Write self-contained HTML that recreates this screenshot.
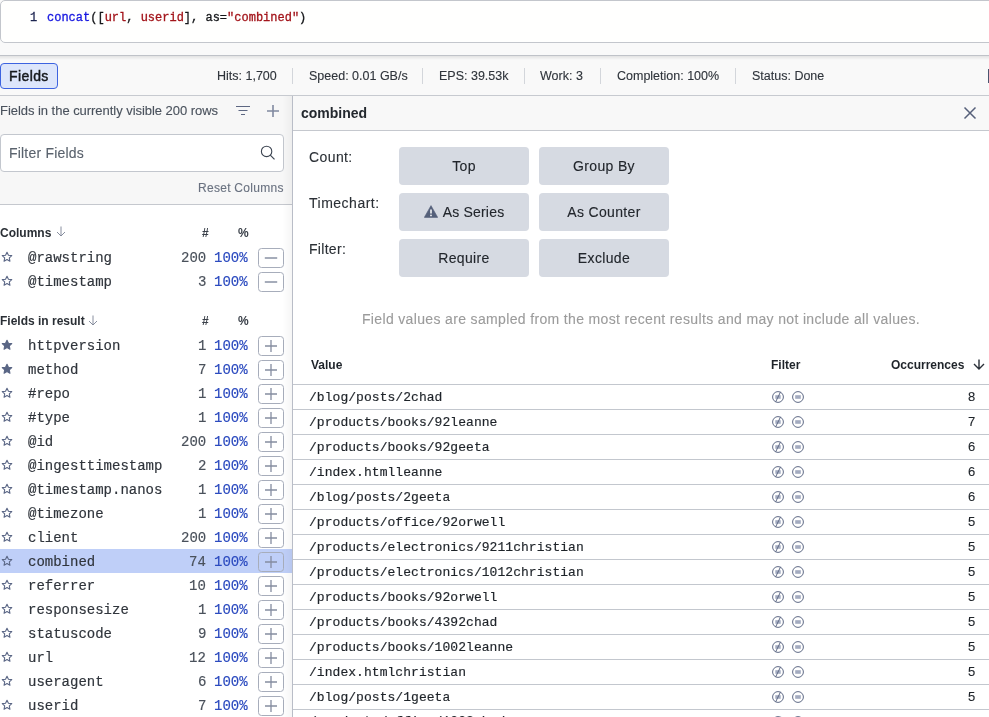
<!DOCTYPE html><html><head><meta charset="utf-8"><style>
*{margin:0;padding:0;box-sizing:border-box}
html,body{width:989px;height:717px;overflow:hidden;background:#f9f9f9;font-family:"Liberation Sans",sans-serif}
#root{position:absolute;left:0;top:0;width:989px;height:717px;overflow:hidden;filter:grayscale(0)}
.t{position:absolute;white-space:pre;line-height:1;will-change:transform}
.m{font-family:"Liberation Mono",monospace;-webkit-text-stroke:0.18px currentColor}
.ic{position:absolute;display:block}
#editor{position:absolute;left:0;top:0;width:1000px;height:43px;background:#fffffe;border:1px solid #c3c6cc;border-radius:5px}
#sep{position:absolute;left:0;top:55px;width:989px;height:1px;background:#bfc2c8}
#sepsh{position:absolute;left:0;top:56px;width:989px;height:4px;background:linear-gradient(to bottom,rgba(0,0,0,0.09),rgba(0,0,0,0))}
#fieldsbtn{position:absolute;left:0;top:63px;width:58px;height:26px;background:#dde6fb;border:1px solid #3d63e0;border-radius:4px}
.vsep{position:absolute;top:68px;width:1px;height:16px;background:#d3d6db}
#rbtn{position:absolute;left:988px;top:69px;width:4px;height:14px;background:#4b5570}
#statusline{position:absolute;left:0;top:95px;width:989px;height:1px;background:#c7cad0}
#lhead{position:absolute;left:0;top:96px;width:292px;height:108px;background:#f7f7f7}
#filterinput{position:absolute;left:0;top:134px;width:284px;height:38px;background:#fff;border:1px solid #c3c7ce;border-radius:4px}
#lline{position:absolute;left:0;top:204px;width:292px;height:1px;background:#c5c8ce}
#llist{position:absolute;left:0;top:205px;width:292px;height:512px;background:#fff}
.hl{position:absolute;left:0;width:292px;height:24px;background:#bfcff8}
#lshadow{position:absolute;left:283px;top:96px;width:9px;height:621px;background:linear-gradient(to right,rgba(0,0,0,0),rgba(0,0,0,0.04))}
#lborder{position:absolute;left:292px;top:96px;width:1px;height:621px;background:#b9bdc7}
#rhead{position:absolute;left:293px;top:96px;width:696px;height:35px;background:#f8f8f8;border-bottom:1px solid #c5c8ce}
#rbody{}
.abtn{position:absolute;width:130px;height:38px;background:#d6dae2;border-radius:4px}
.rline{position:absolute;left:293px;width:696px;height:1px;background:#c3c7ce}
</style></head><body><div id="root"><div style="position:absolute;left:293px;top:131px;width:696px;height:586px;background:#fff"></div><div id="editor"></div>
<div class="t m" style="left:29.5px;top:12.00px;font-size:12px;color:#1d2550;-webkit-text-stroke:0.3px currentColor;">1</div>
<div class="t m" style="left:47.1px;top:12.00px;font-size:12px;color:#141619;-webkit-text-stroke:0.3px currentColor;"><span style="color:#1616e0">concat</span>([<span style="color:#a3151b">url</span>, <span style="color:#a3151b">userid</span>], as=<span style="color:#a3151b">"combined"</span>)</div>
<div id="sep"></div><div id="sepsh"></div>
<div id="fieldsbtn"></div>
<div class="t" style="left:9.3px;top:68.65px;font-size:14px;font-weight:400;color:#16191d;letter-spacing:0.4px;-webkit-text-stroke:0.45px currentColor;">Fields</div>
<div class="t" style="left:217.2px;top:69.92px;font-size:12.5px;font-weight:400;color:#2f343b;-webkit-text-stroke:0.12px currentColor;">Hits: 1,700</div>
<div class="t" style="left:309.0px;top:69.92px;font-size:12.5px;font-weight:400;color:#2f343b;-webkit-text-stroke:0.12px currentColor;">Speed: 0.01 GB/s</div>
<div class="t" style="left:438.8px;top:69.92px;font-size:12.5px;font-weight:400;color:#2f343b;-webkit-text-stroke:0.12px currentColor;">EPS: 39.53k</div>
<div class="t" style="left:540.0px;top:69.92px;font-size:12.5px;font-weight:400;color:#2f343b;-webkit-text-stroke:0.12px currentColor;">Work: 3</div>
<div class="t" style="left:616.7px;top:69.92px;font-size:12.5px;font-weight:400;color:#2f343b;-webkit-text-stroke:0.12px currentColor;">Completion: 100%</div>
<div class="t" style="left:751.8px;top:69.92px;font-size:12.5px;font-weight:400;color:#2f343b;-webkit-text-stroke:0.12px currentColor;">Status: Done</div>
<div class="vsep" style="left:292px"></div>
<div class="vsep" style="left:422px"></div>
<div class="vsep" style="left:524px"></div>
<div class="vsep" style="left:600px"></div>
<div class="vsep" style="left:735px"></div>
<div id="rbtn"></div>
<div id="statusline"></div>
<div id="lhead"></div>
<div class="t" style="left:0px;top:103.90px;font-size:13px;font-weight:400;color:#4a525d;-webkit-text-stroke:0.12px currentColor;letter-spacing:-0.04px;">Fields in the currently visible 200 rows</div>
<svg class="ic" style="left:235px;top:104px" width="16" height="14" viewBox="0 0 16 14"><path d="M1 2.5h14M3.5 6.5h9M6 10.5h4" stroke="#5d6782" stroke-width="1.1" fill="none"/></svg>
<svg class="ic" style="left:265px;top:104px" width="16" height="14" viewBox="0 0 16 14"><path d="M8 1v12M2 7h12" stroke="#8089a0" stroke-width="1.6" fill="none"/></svg>
<div id="filterinput"></div>
<div class="t" style="left:9px;top:146.05px;font-size:14px;font-weight:400;color:#5a626d;-webkit-text-stroke:0.12px currentColor;letter-spacing:0.2px;">Filter Fields</div>
<svg class="ic" style="left:259px;top:144px" width="18" height="18" viewBox="0 0 18 18"><circle cx="7.6" cy="7.4" r="5.2" stroke="#3d4552" stroke-width="1.1" fill="none"/><path d="M11.3 11.1l4.2 4.2" stroke="#3d4552" stroke-width="1.2"/></svg>
<div class="t" style="right:705px;top:181.54px;font-size:12px;font-weight:400;color:#6a7280;-webkit-text-stroke:0.12px currentColor;letter-spacing:0.28px;">Reset Columns</div>
<div id="lline"></div>
<div id="llist"></div>
<div class="t" style="left:0px;top:226.64px;font-size:12px;font-weight:700;color:#2a2f35;">Columns</div>
<svg class="ic" style="left:54.5px;top:226.3px" width="12" height="12" viewBox="0 0 12 12"><path d="M6 0.5v9.5M2 6l4 4 4-4" stroke="#7a8294" stroke-width="0.9" fill="none"/></svg>
<div class="t" style="right:780.2px;top:227.14px;font-size:12px;font-weight:700;color:#3a4049;">#</div>
<div class="t" style="right:740.5px;top:227.14px;font-size:12px;font-weight:700;color:#3a4049;">%</div>
<svg class="ic" style="left:1px;top:251px" width="12" height="12" viewBox="0 0 12 12"><path d="M6 1.2l1.45 3.05 3.3.42-2.43 2.28.62 3.28L6 8.6l-2.94 1.63.62-3.28L1.25 4.67l3.3-.42z" fill="none" stroke="#5a6685" stroke-width="1.1" stroke-linejoin="round"/></svg>
<div class="t m" style="left:27.5px;top:251.07px;font-size:14px;color:#30353c;">@rawstring</div>
<div class="t m" style="right:783px;top:251.07px;font-size:14px;color:#4a515b;">200</div>
<div class="t m" style="left:214px;top:251.07px;font-size:14px;color:#2b4abf;">100%</div>
<svg class="ic" style="left:258px;top:248px" width="26" height="20" viewBox="0 0 26 20"><rect x="0.5" y="0.5" width="25" height="19" rx="3" fill="none" stroke="#a7adbb"/><path d="M6.8 10h12.4" stroke="#979eae" stroke-width="1.7"/></svg>
<svg class="ic" style="left:1px;top:275px" width="12" height="12" viewBox="0 0 12 12"><path d="M6 1.2l1.45 3.05 3.3.42-2.43 2.28.62 3.28L6 8.6l-2.94 1.63.62-3.28L1.25 4.67l3.3-.42z" fill="none" stroke="#5a6685" stroke-width="1.1" stroke-linejoin="round"/></svg>
<div class="t m" style="left:27.5px;top:275.07px;font-size:14px;color:#30353c;">@timestamp</div>
<div class="t m" style="right:783px;top:275.07px;font-size:14px;color:#4a515b;">3</div>
<div class="t m" style="left:214px;top:275.07px;font-size:14px;color:#2b4abf;">100%</div>
<svg class="ic" style="left:258px;top:272px" width="26" height="20" viewBox="0 0 26 20"><rect x="0.5" y="0.5" width="25" height="19" rx="3" fill="none" stroke="#a7adbb"/><path d="M6.8 10h12.4" stroke="#979eae" stroke-width="1.7"/></svg>
<div class="t" style="left:0px;top:315.14px;font-size:12px;font-weight:700;color:#2a2f35;">Fields in result</div>
<svg class="ic" style="left:87.3px;top:315px" width="12" height="12" viewBox="0 0 12 12"><path d="M6 0.5v9.5M2 6l4 4 4-4" stroke="#7a8294" stroke-width="0.9" fill="none"/></svg>
<div class="t" style="right:780.2px;top:315.44px;font-size:12px;font-weight:700;color:#3a4049;">#</div>
<div class="t" style="right:740.5px;top:315.44px;font-size:12px;font-weight:700;color:#3a4049;">%</div>
<svg class="ic" style="left:1px;top:339px" width="12" height="12" viewBox="0 0 12 12"><path d="M6 1.2l1.45 3.05 3.3.42-2.43 2.28.62 3.28L6 8.6l-2.94 1.63.62-3.28L1.25 4.67l3.3-.42z" fill="#5a6685" stroke="#5a6685" stroke-width="1.1" stroke-linejoin="round"/></svg>
<div class="t m" style="left:27.5px;top:339.07px;font-size:14px;color:#30353c;">httpversion</div>
<div class="t m" style="right:783px;top:339.07px;font-size:14px;color:#4a515b;">1</div>
<div class="t m" style="left:214px;top:339.07px;font-size:14px;color:#2b4abf;">100%</div>
<svg class="ic" style="left:258px;top:336px" width="26" height="20" viewBox="0 0 26 20"><rect x="0.5" y="0.5" width="25" height="19" rx="3" fill="none" stroke="#a7adbb"/><path d="M7 10h12M13 4v12" stroke="#858da0" stroke-width="1.3"/></svg>
<svg class="ic" style="left:1px;top:363px" width="12" height="12" viewBox="0 0 12 12"><path d="M6 1.2l1.45 3.05 3.3.42-2.43 2.28.62 3.28L6 8.6l-2.94 1.63.62-3.28L1.25 4.67l3.3-.42z" fill="#5a6685" stroke="#5a6685" stroke-width="1.1" stroke-linejoin="round"/></svg>
<div class="t m" style="left:27.5px;top:363.07px;font-size:14px;color:#30353c;">method</div>
<div class="t m" style="right:783px;top:363.07px;font-size:14px;color:#4a515b;">7</div>
<div class="t m" style="left:214px;top:363.07px;font-size:14px;color:#2b4abf;">100%</div>
<svg class="ic" style="left:258px;top:360px" width="26" height="20" viewBox="0 0 26 20"><rect x="0.5" y="0.5" width="25" height="19" rx="3" fill="none" stroke="#a7adbb"/><path d="M7 10h12M13 4v12" stroke="#858da0" stroke-width="1.3"/></svg>
<svg class="ic" style="left:1px;top:387px" width="12" height="12" viewBox="0 0 12 12"><path d="M6 1.2l1.45 3.05 3.3.42-2.43 2.28.62 3.28L6 8.6l-2.94 1.63.62-3.28L1.25 4.67l3.3-.42z" fill="none" stroke="#5a6685" stroke-width="1.1" stroke-linejoin="round"/></svg>
<div class="t m" style="left:27.5px;top:387.07px;font-size:14px;color:#30353c;">#repo</div>
<div class="t m" style="right:783px;top:387.07px;font-size:14px;color:#4a515b;">1</div>
<div class="t m" style="left:214px;top:387.07px;font-size:14px;color:#2b4abf;">100%</div>
<svg class="ic" style="left:258px;top:384px" width="26" height="20" viewBox="0 0 26 20"><rect x="0.5" y="0.5" width="25" height="19" rx="3" fill="none" stroke="#a7adbb"/><path d="M7 10h12M13 4v12" stroke="#858da0" stroke-width="1.3"/></svg>
<svg class="ic" style="left:1px;top:411px" width="12" height="12" viewBox="0 0 12 12"><path d="M6 1.2l1.45 3.05 3.3.42-2.43 2.28.62 3.28L6 8.6l-2.94 1.63.62-3.28L1.25 4.67l3.3-.42z" fill="none" stroke="#5a6685" stroke-width="1.1" stroke-linejoin="round"/></svg>
<div class="t m" style="left:27.5px;top:411.07px;font-size:14px;color:#30353c;">#type</div>
<div class="t m" style="right:783px;top:411.07px;font-size:14px;color:#4a515b;">1</div>
<div class="t m" style="left:214px;top:411.07px;font-size:14px;color:#2b4abf;">100%</div>
<svg class="ic" style="left:258px;top:408px" width="26" height="20" viewBox="0 0 26 20"><rect x="0.5" y="0.5" width="25" height="19" rx="3" fill="none" stroke="#a7adbb"/><path d="M7 10h12M13 4v12" stroke="#858da0" stroke-width="1.3"/></svg>
<svg class="ic" style="left:1px;top:435px" width="12" height="12" viewBox="0 0 12 12"><path d="M6 1.2l1.45 3.05 3.3.42-2.43 2.28.62 3.28L6 8.6l-2.94 1.63.62-3.28L1.25 4.67l3.3-.42z" fill="none" stroke="#5a6685" stroke-width="1.1" stroke-linejoin="round"/></svg>
<div class="t m" style="left:27.5px;top:435.07px;font-size:14px;color:#30353c;">@id</div>
<div class="t m" style="right:783px;top:435.07px;font-size:14px;color:#4a515b;">200</div>
<div class="t m" style="left:214px;top:435.07px;font-size:14px;color:#2b4abf;">100%</div>
<svg class="ic" style="left:258px;top:432px" width="26" height="20" viewBox="0 0 26 20"><rect x="0.5" y="0.5" width="25" height="19" rx="3" fill="none" stroke="#a7adbb"/><path d="M7 10h12M13 4v12" stroke="#858da0" stroke-width="1.3"/></svg>
<svg class="ic" style="left:1px;top:459px" width="12" height="12" viewBox="0 0 12 12"><path d="M6 1.2l1.45 3.05 3.3.42-2.43 2.28.62 3.28L6 8.6l-2.94 1.63.62-3.28L1.25 4.67l3.3-.42z" fill="none" stroke="#5a6685" stroke-width="1.1" stroke-linejoin="round"/></svg>
<div class="t m" style="left:27.5px;top:459.07px;font-size:14px;color:#30353c;">@ingesttimestamp</div>
<div class="t m" style="right:783px;top:459.07px;font-size:14px;color:#4a515b;">2</div>
<div class="t m" style="left:214px;top:459.07px;font-size:14px;color:#2b4abf;">100%</div>
<svg class="ic" style="left:258px;top:456px" width="26" height="20" viewBox="0 0 26 20"><rect x="0.5" y="0.5" width="25" height="19" rx="3" fill="none" stroke="#a7adbb"/><path d="M7 10h12M13 4v12" stroke="#858da0" stroke-width="1.3"/></svg>
<svg class="ic" style="left:1px;top:483px" width="12" height="12" viewBox="0 0 12 12"><path d="M6 1.2l1.45 3.05 3.3.42-2.43 2.28.62 3.28L6 8.6l-2.94 1.63.62-3.28L1.25 4.67l3.3-.42z" fill="none" stroke="#5a6685" stroke-width="1.1" stroke-linejoin="round"/></svg>
<div class="t m" style="left:27.5px;top:483.07px;font-size:14px;color:#30353c;">@timestamp.nanos</div>
<div class="t m" style="right:783px;top:483.07px;font-size:14px;color:#4a515b;">1</div>
<div class="t m" style="left:214px;top:483.07px;font-size:14px;color:#2b4abf;">100%</div>
<svg class="ic" style="left:258px;top:480px" width="26" height="20" viewBox="0 0 26 20"><rect x="0.5" y="0.5" width="25" height="19" rx="3" fill="none" stroke="#a7adbb"/><path d="M7 10h12M13 4v12" stroke="#858da0" stroke-width="1.3"/></svg>
<svg class="ic" style="left:1px;top:507px" width="12" height="12" viewBox="0 0 12 12"><path d="M6 1.2l1.45 3.05 3.3.42-2.43 2.28.62 3.28L6 8.6l-2.94 1.63.62-3.28L1.25 4.67l3.3-.42z" fill="none" stroke="#5a6685" stroke-width="1.1" stroke-linejoin="round"/></svg>
<div class="t m" style="left:27.5px;top:507.07px;font-size:14px;color:#30353c;">@timezone</div>
<div class="t m" style="right:783px;top:507.07px;font-size:14px;color:#4a515b;">1</div>
<div class="t m" style="left:214px;top:507.07px;font-size:14px;color:#2b4abf;">100%</div>
<svg class="ic" style="left:258px;top:504px" width="26" height="20" viewBox="0 0 26 20"><rect x="0.5" y="0.5" width="25" height="19" rx="3" fill="none" stroke="#a7adbb"/><path d="M7 10h12M13 4v12" stroke="#858da0" stroke-width="1.3"/></svg>
<svg class="ic" style="left:1px;top:531px" width="12" height="12" viewBox="0 0 12 12"><path d="M6 1.2l1.45 3.05 3.3.42-2.43 2.28.62 3.28L6 8.6l-2.94 1.63.62-3.28L1.25 4.67l3.3-.42z" fill="none" stroke="#5a6685" stroke-width="1.1" stroke-linejoin="round"/></svg>
<div class="t m" style="left:27.5px;top:531.07px;font-size:14px;color:#30353c;">client</div>
<div class="t m" style="right:783px;top:531.07px;font-size:14px;color:#4a515b;">200</div>
<div class="t m" style="left:214px;top:531.07px;font-size:14px;color:#2b4abf;">100%</div>
<svg class="ic" style="left:258px;top:528px" width="26" height="20" viewBox="0 0 26 20"><rect x="0.5" y="0.5" width="25" height="19" rx="3" fill="none" stroke="#a7adbb"/><path d="M7 10h12M13 4v12" stroke="#858da0" stroke-width="1.3"/></svg>
<div class="hl" style="top:549px"></div>
<svg class="ic" style="left:1px;top:555px" width="12" height="12" viewBox="0 0 12 12"><path d="M6 1.2l1.45 3.05 3.3.42-2.43 2.28.62 3.28L6 8.6l-2.94 1.63.62-3.28L1.25 4.67l3.3-.42z" fill="none" stroke="#5a6685" stroke-width="1.1" stroke-linejoin="round"/></svg>
<div class="t m" style="left:27.5px;top:555.07px;font-size:14px;color:#30353c;">combined</div>
<div class="t m" style="right:783px;top:555.07px;font-size:14px;color:#4a515b;">74</div>
<div class="t m" style="left:214px;top:555.07px;font-size:14px;color:#2b4abf;">100%</div>
<svg class="ic" style="left:258px;top:552px" width="26" height="20" viewBox="0 0 26 20"><rect x="0.5" y="0.5" width="25" height="19" rx="3" fill="none" stroke="#a7adbb"/><path d="M7 10h12M13 4v12" stroke="#858da0" stroke-width="1.3"/></svg>
<svg class="ic" style="left:1px;top:579px" width="12" height="12" viewBox="0 0 12 12"><path d="M6 1.2l1.45 3.05 3.3.42-2.43 2.28.62 3.28L6 8.6l-2.94 1.63.62-3.28L1.25 4.67l3.3-.42z" fill="none" stroke="#5a6685" stroke-width="1.1" stroke-linejoin="round"/></svg>
<div class="t m" style="left:27.5px;top:579.07px;font-size:14px;color:#30353c;">referrer</div>
<div class="t m" style="right:783px;top:579.07px;font-size:14px;color:#4a515b;">10</div>
<div class="t m" style="left:214px;top:579.07px;font-size:14px;color:#2b4abf;">100%</div>
<svg class="ic" style="left:258px;top:576px" width="26" height="20" viewBox="0 0 26 20"><rect x="0.5" y="0.5" width="25" height="19" rx="3" fill="none" stroke="#a7adbb"/><path d="M7 10h12M13 4v12" stroke="#858da0" stroke-width="1.3"/></svg>
<svg class="ic" style="left:1px;top:603px" width="12" height="12" viewBox="0 0 12 12"><path d="M6 1.2l1.45 3.05 3.3.42-2.43 2.28.62 3.28L6 8.6l-2.94 1.63.62-3.28L1.25 4.67l3.3-.42z" fill="none" stroke="#5a6685" stroke-width="1.1" stroke-linejoin="round"/></svg>
<div class="t m" style="left:27.5px;top:603.07px;font-size:14px;color:#30353c;">responsesize</div>
<div class="t m" style="right:783px;top:603.07px;font-size:14px;color:#4a515b;">1</div>
<div class="t m" style="left:214px;top:603.07px;font-size:14px;color:#2b4abf;">100%</div>
<svg class="ic" style="left:258px;top:600px" width="26" height="20" viewBox="0 0 26 20"><rect x="0.5" y="0.5" width="25" height="19" rx="3" fill="none" stroke="#a7adbb"/><path d="M7 10h12M13 4v12" stroke="#858da0" stroke-width="1.3"/></svg>
<svg class="ic" style="left:1px;top:627px" width="12" height="12" viewBox="0 0 12 12"><path d="M6 1.2l1.45 3.05 3.3.42-2.43 2.28.62 3.28L6 8.6l-2.94 1.63.62-3.28L1.25 4.67l3.3-.42z" fill="none" stroke="#5a6685" stroke-width="1.1" stroke-linejoin="round"/></svg>
<div class="t m" style="left:27.5px;top:627.07px;font-size:14px;color:#30353c;">statuscode</div>
<div class="t m" style="right:783px;top:627.07px;font-size:14px;color:#4a515b;">9</div>
<div class="t m" style="left:214px;top:627.07px;font-size:14px;color:#2b4abf;">100%</div>
<svg class="ic" style="left:258px;top:624px" width="26" height="20" viewBox="0 0 26 20"><rect x="0.5" y="0.5" width="25" height="19" rx="3" fill="none" stroke="#a7adbb"/><path d="M7 10h12M13 4v12" stroke="#858da0" stroke-width="1.3"/></svg>
<svg class="ic" style="left:1px;top:651px" width="12" height="12" viewBox="0 0 12 12"><path d="M6 1.2l1.45 3.05 3.3.42-2.43 2.28.62 3.28L6 8.6l-2.94 1.63.62-3.28L1.25 4.67l3.3-.42z" fill="none" stroke="#5a6685" stroke-width="1.1" stroke-linejoin="round"/></svg>
<div class="t m" style="left:27.5px;top:651.07px;font-size:14px;color:#30353c;">url</div>
<div class="t m" style="right:783px;top:651.07px;font-size:14px;color:#4a515b;">12</div>
<div class="t m" style="left:214px;top:651.07px;font-size:14px;color:#2b4abf;">100%</div>
<svg class="ic" style="left:258px;top:648px" width="26" height="20" viewBox="0 0 26 20"><rect x="0.5" y="0.5" width="25" height="19" rx="3" fill="none" stroke="#a7adbb"/><path d="M7 10h12M13 4v12" stroke="#858da0" stroke-width="1.3"/></svg>
<svg class="ic" style="left:1px;top:675px" width="12" height="12" viewBox="0 0 12 12"><path d="M6 1.2l1.45 3.05 3.3.42-2.43 2.28.62 3.28L6 8.6l-2.94 1.63.62-3.28L1.25 4.67l3.3-.42z" fill="none" stroke="#5a6685" stroke-width="1.1" stroke-linejoin="round"/></svg>
<div class="t m" style="left:27.5px;top:675.07px;font-size:14px;color:#30353c;">useragent</div>
<div class="t m" style="right:783px;top:675.07px;font-size:14px;color:#4a515b;">6</div>
<div class="t m" style="left:214px;top:675.07px;font-size:14px;color:#2b4abf;">100%</div>
<svg class="ic" style="left:258px;top:672px" width="26" height="20" viewBox="0 0 26 20"><rect x="0.5" y="0.5" width="25" height="19" rx="3" fill="none" stroke="#a7adbb"/><path d="M7 10h12M13 4v12" stroke="#858da0" stroke-width="1.3"/></svg>
<svg class="ic" style="left:1px;top:699px" width="12" height="12" viewBox="0 0 12 12"><path d="M6 1.2l1.45 3.05 3.3.42-2.43 2.28.62 3.28L6 8.6l-2.94 1.63.62-3.28L1.25 4.67l3.3-.42z" fill="none" stroke="#5a6685" stroke-width="1.1" stroke-linejoin="round"/></svg>
<div class="t m" style="left:27.5px;top:699.07px;font-size:14px;color:#30353c;">userid</div>
<div class="t m" style="right:783px;top:699.07px;font-size:14px;color:#4a515b;">7</div>
<div class="t m" style="left:214px;top:699.07px;font-size:14px;color:#2b4abf;">100%</div>
<svg class="ic" style="left:258px;top:696px" width="26" height="20" viewBox="0 0 26 20"><rect x="0.5" y="0.5" width="25" height="19" rx="3" fill="none" stroke="#a7adbb"/><path d="M7 10h12M13 4v12" stroke="#858da0" stroke-width="1.3"/></svg>
<div id="lshadow"></div>
<div id="lborder"></div>
<div id="rhead"></div>
<div class="t" style="left:300.8px;top:106.05px;font-size:14px;font-weight:700;color:#23282e;">combined</div>
<svg class="ic" style="left:963px;top:106px" width="14" height="14" viewBox="0 0 14 14"><path d="M1.5 1.5l11 11M12.5 1.5l-11 11" stroke="#56607a" stroke-width="1.5"/></svg>
<div class="t" style="left:309px;top:150.45px;font-size:14px;font-weight:400;color:#2b3036;-webkit-text-stroke:0.12px currentColor;letter-spacing:0.4px;">Count:</div>
<div class="t" style="left:309px;top:196.25px;font-size:14px;font-weight:400;color:#2b3036;-webkit-text-stroke:0.12px currentColor;letter-spacing:0.5px;">Timechart:</div>
<div class="t" style="left:308.6px;top:242.15px;font-size:14px;font-weight:400;color:#2b3036;-webkit-text-stroke:0.12px currentColor;letter-spacing:0.3px;">Filter:</div>
<div class="abtn" style="left:399px;top:147px"></div>
<div class="t" style="left:399px;width:130px;text-align:center;top:158.90px;font-size:14px;color:#22262c;letter-spacing:0.35px;-webkit-text-stroke:0.12px currentColor">Top</div>
<div class="abtn" style="left:539px;top:147px"></div>
<div class="t" style="left:539px;width:130px;text-align:center;top:158.90px;font-size:14px;color:#22262c;letter-spacing:0.35px;-webkit-text-stroke:0.12px currentColor">Group By</div>
<div class="abtn" style="left:399px;top:193px"></div>
<div class="t" style="left:399px;width:130px;text-align:center;top:203.90px;font-size:14px;color:#22262c;letter-spacing:0.2px;-webkit-text-stroke:0.12px currentColor"><svg style="vertical-align:-0.5px;margin-right:5px;position:relative;top:1px" width="14" height="13" viewBox="0 0 14 13"><path d="M7 0.6L13.7 12.4H0.3z" fill="#55607a" stroke="#55607a" stroke-width="0.6" stroke-linejoin="round"/><path d="M7 4.6v3.8" stroke="#fff" stroke-width="1.5"/><circle cx="7" cy="10.4" r="0.85" fill="#fff"/></svg>As Series</div>
<div class="abtn" style="left:539px;top:193px"></div>
<div class="t" style="left:539px;width:130px;text-align:center;top:204.90px;font-size:14px;color:#22262c;letter-spacing:0.35px;-webkit-text-stroke:0.12px currentColor">As Counter</div>
<div class="abtn" style="left:399px;top:239px"></div>
<div class="t" style="left:399px;width:130px;text-align:center;top:250.90px;font-size:14px;color:#22262c;letter-spacing:0.35px;-webkit-text-stroke:0.12px currentColor">Require</div>
<div class="abtn" style="left:539px;top:239px"></div>
<div class="t" style="left:539px;width:130px;text-align:center;top:250.90px;font-size:14px;color:#22262c;letter-spacing:0.35px;-webkit-text-stroke:0.12px currentColor">Exclude</div>
<div class="t" style="left:293px;width:696px;text-align:center;top:312.05px;font-size:14px;color:#9b9b9b;letter-spacing:0.35px;-webkit-text-stroke:0.12px currentColor">Field values are sampled from the most recent results and may not include all values.</div>
<div class="t" style="left:311px;top:358.64px;font-size:12px;font-weight:700;color:#1f242a;">Value</div>
<div class="t" style="left:771px;top:358.64px;font-size:12px;font-weight:700;color:#1f242a;">Filter</div>
<div class="t" style="left:890.5px;top:358.64px;font-size:12px;font-weight:700;color:#1f242a;">Occurrences</div>
<svg class="ic" style="left:973px;top:358.5px" width="12" height="12" viewBox="0 0 12 12"><path d="M6 0.5v9.5M1 5l5 5 5-5" stroke="#2a3038" stroke-width="1.4" fill="none"/></svg>
<div class="rline" style="top:384px"></div>
<div class="t m" style="left:308.5px;top:391.24px;font-size:13px;color:#1f242a;letter-spacing:0.05px;">/blog/posts/2chad</div>
<svg class="ic" style="left:771px;top:390px" width="34" height="14" viewBox="0 0 34 14"><circle cx="7" cy="7" r="5.4" fill="none" stroke="#5f6a86" stroke-width="1"/><rect x="4.3" y="5.2" width="5.4" height="3.6" fill="#a3abc0"/><path d="M9.6 1.8L4.6 12" stroke="#5f6a86" stroke-width="1"/><circle cx="27" cy="7" r="5.4" fill="none" stroke="#5f6a86" stroke-width="1"/><rect x="24.2" y="5.2" width="5.6" height="3.6" fill="#a3abc0"/></svg>
<div class="t" style="right:14px;top:389.70px;font-size:13px;font-weight:400;color:#1f242a;-webkit-text-stroke:0.12px currentColor;">8</div>
<div class="rline" style="top:409px"></div>
<div class="t m" style="left:308.5px;top:416.24px;font-size:13px;color:#1f242a;letter-spacing:0.05px;">/products/books/92leanne</div>
<svg class="ic" style="left:771px;top:415px" width="34" height="14" viewBox="0 0 34 14"><circle cx="7" cy="7" r="5.4" fill="none" stroke="#5f6a86" stroke-width="1"/><rect x="4.3" y="5.2" width="5.4" height="3.6" fill="#a3abc0"/><path d="M9.6 1.8L4.6 12" stroke="#5f6a86" stroke-width="1"/><circle cx="27" cy="7" r="5.4" fill="none" stroke="#5f6a86" stroke-width="1"/><rect x="24.2" y="5.2" width="5.6" height="3.6" fill="#a3abc0"/></svg>
<div class="t" style="right:14px;top:414.70px;font-size:13px;font-weight:400;color:#1f242a;-webkit-text-stroke:0.12px currentColor;">7</div>
<div class="rline" style="top:434px"></div>
<div class="t m" style="left:308.5px;top:441.24px;font-size:13px;color:#1f242a;letter-spacing:0.05px;">/products/books/92geeta</div>
<svg class="ic" style="left:771px;top:440px" width="34" height="14" viewBox="0 0 34 14"><circle cx="7" cy="7" r="5.4" fill="none" stroke="#5f6a86" stroke-width="1"/><rect x="4.3" y="5.2" width="5.4" height="3.6" fill="#a3abc0"/><path d="M9.6 1.8L4.6 12" stroke="#5f6a86" stroke-width="1"/><circle cx="27" cy="7" r="5.4" fill="none" stroke="#5f6a86" stroke-width="1"/><rect x="24.2" y="5.2" width="5.6" height="3.6" fill="#a3abc0"/></svg>
<div class="t" style="right:14px;top:439.70px;font-size:13px;font-weight:400;color:#1f242a;-webkit-text-stroke:0.12px currentColor;">6</div>
<div class="rline" style="top:459px"></div>
<div class="t m" style="left:308.5px;top:466.24px;font-size:13px;color:#1f242a;letter-spacing:0.05px;">/index.htmlleanne</div>
<svg class="ic" style="left:771px;top:465px" width="34" height="14" viewBox="0 0 34 14"><circle cx="7" cy="7" r="5.4" fill="none" stroke="#5f6a86" stroke-width="1"/><rect x="4.3" y="5.2" width="5.4" height="3.6" fill="#a3abc0"/><path d="M9.6 1.8L4.6 12" stroke="#5f6a86" stroke-width="1"/><circle cx="27" cy="7" r="5.4" fill="none" stroke="#5f6a86" stroke-width="1"/><rect x="24.2" y="5.2" width="5.6" height="3.6" fill="#a3abc0"/></svg>
<div class="t" style="right:14px;top:464.70px;font-size:13px;font-weight:400;color:#1f242a;-webkit-text-stroke:0.12px currentColor;">6</div>
<div class="rline" style="top:484px"></div>
<div class="t m" style="left:308.5px;top:491.24px;font-size:13px;color:#1f242a;letter-spacing:0.05px;">/blog/posts/2geeta</div>
<svg class="ic" style="left:771px;top:490px" width="34" height="14" viewBox="0 0 34 14"><circle cx="7" cy="7" r="5.4" fill="none" stroke="#5f6a86" stroke-width="1"/><rect x="4.3" y="5.2" width="5.4" height="3.6" fill="#a3abc0"/><path d="M9.6 1.8L4.6 12" stroke="#5f6a86" stroke-width="1"/><circle cx="27" cy="7" r="5.4" fill="none" stroke="#5f6a86" stroke-width="1"/><rect x="24.2" y="5.2" width="5.6" height="3.6" fill="#a3abc0"/></svg>
<div class="t" style="right:14px;top:489.70px;font-size:13px;font-weight:400;color:#1f242a;-webkit-text-stroke:0.12px currentColor;">6</div>
<div class="rline" style="top:509px"></div>
<div class="t m" style="left:308.5px;top:516.24px;font-size:13px;color:#1f242a;letter-spacing:0.05px;">/products/office/92orwell</div>
<svg class="ic" style="left:771px;top:515px" width="34" height="14" viewBox="0 0 34 14"><circle cx="7" cy="7" r="5.4" fill="none" stroke="#5f6a86" stroke-width="1"/><rect x="4.3" y="5.2" width="5.4" height="3.6" fill="#a3abc0"/><path d="M9.6 1.8L4.6 12" stroke="#5f6a86" stroke-width="1"/><circle cx="27" cy="7" r="5.4" fill="none" stroke="#5f6a86" stroke-width="1"/><rect x="24.2" y="5.2" width="5.6" height="3.6" fill="#a3abc0"/></svg>
<div class="t" style="right:14px;top:514.70px;font-size:13px;font-weight:400;color:#1f242a;-webkit-text-stroke:0.12px currentColor;">5</div>
<div class="rline" style="top:534px"></div>
<div class="t m" style="left:308.5px;top:541.24px;font-size:13px;color:#1f242a;letter-spacing:0.05px;">/products/electronics/9211christian</div>
<svg class="ic" style="left:771px;top:540px" width="34" height="14" viewBox="0 0 34 14"><circle cx="7" cy="7" r="5.4" fill="none" stroke="#5f6a86" stroke-width="1"/><rect x="4.3" y="5.2" width="5.4" height="3.6" fill="#a3abc0"/><path d="M9.6 1.8L4.6 12" stroke="#5f6a86" stroke-width="1"/><circle cx="27" cy="7" r="5.4" fill="none" stroke="#5f6a86" stroke-width="1"/><rect x="24.2" y="5.2" width="5.6" height="3.6" fill="#a3abc0"/></svg>
<div class="t" style="right:14px;top:539.70px;font-size:13px;font-weight:400;color:#1f242a;-webkit-text-stroke:0.12px currentColor;">5</div>
<div class="rline" style="top:559px"></div>
<div class="t m" style="left:308.5px;top:566.24px;font-size:13px;color:#1f242a;letter-spacing:0.05px;">/products/electronics/1012christian</div>
<svg class="ic" style="left:771px;top:565px" width="34" height="14" viewBox="0 0 34 14"><circle cx="7" cy="7" r="5.4" fill="none" stroke="#5f6a86" stroke-width="1"/><rect x="4.3" y="5.2" width="5.4" height="3.6" fill="#a3abc0"/><path d="M9.6 1.8L4.6 12" stroke="#5f6a86" stroke-width="1"/><circle cx="27" cy="7" r="5.4" fill="none" stroke="#5f6a86" stroke-width="1"/><rect x="24.2" y="5.2" width="5.6" height="3.6" fill="#a3abc0"/></svg>
<div class="t" style="right:14px;top:564.70px;font-size:13px;font-weight:400;color:#1f242a;-webkit-text-stroke:0.12px currentColor;">5</div>
<div class="rline" style="top:584px"></div>
<div class="t m" style="left:308.5px;top:591.24px;font-size:13px;color:#1f242a;letter-spacing:0.05px;">/products/books/92orwell</div>
<svg class="ic" style="left:771px;top:590px" width="34" height="14" viewBox="0 0 34 14"><circle cx="7" cy="7" r="5.4" fill="none" stroke="#5f6a86" stroke-width="1"/><rect x="4.3" y="5.2" width="5.4" height="3.6" fill="#a3abc0"/><path d="M9.6 1.8L4.6 12" stroke="#5f6a86" stroke-width="1"/><circle cx="27" cy="7" r="5.4" fill="none" stroke="#5f6a86" stroke-width="1"/><rect x="24.2" y="5.2" width="5.6" height="3.6" fill="#a3abc0"/></svg>
<div class="t" style="right:14px;top:589.70px;font-size:13px;font-weight:400;color:#1f242a;-webkit-text-stroke:0.12px currentColor;">5</div>
<div class="rline" style="top:609px"></div>
<div class="t m" style="left:308.5px;top:616.24px;font-size:13px;color:#1f242a;letter-spacing:0.05px;">/products/books/4392chad</div>
<svg class="ic" style="left:771px;top:615px" width="34" height="14" viewBox="0 0 34 14"><circle cx="7" cy="7" r="5.4" fill="none" stroke="#5f6a86" stroke-width="1"/><rect x="4.3" y="5.2" width="5.4" height="3.6" fill="#a3abc0"/><path d="M9.6 1.8L4.6 12" stroke="#5f6a86" stroke-width="1"/><circle cx="27" cy="7" r="5.4" fill="none" stroke="#5f6a86" stroke-width="1"/><rect x="24.2" y="5.2" width="5.6" height="3.6" fill="#a3abc0"/></svg>
<div class="t" style="right:14px;top:614.70px;font-size:13px;font-weight:400;color:#1f242a;-webkit-text-stroke:0.12px currentColor;">5</div>
<div class="rline" style="top:634px"></div>
<div class="t m" style="left:308.5px;top:641.24px;font-size:13px;color:#1f242a;letter-spacing:0.05px;">/products/books/1002leanne</div>
<svg class="ic" style="left:771px;top:640px" width="34" height="14" viewBox="0 0 34 14"><circle cx="7" cy="7" r="5.4" fill="none" stroke="#5f6a86" stroke-width="1"/><rect x="4.3" y="5.2" width="5.4" height="3.6" fill="#a3abc0"/><path d="M9.6 1.8L4.6 12" stroke="#5f6a86" stroke-width="1"/><circle cx="27" cy="7" r="5.4" fill="none" stroke="#5f6a86" stroke-width="1"/><rect x="24.2" y="5.2" width="5.6" height="3.6" fill="#a3abc0"/></svg>
<div class="t" style="right:14px;top:639.70px;font-size:13px;font-weight:400;color:#1f242a;-webkit-text-stroke:0.12px currentColor;">5</div>
<div class="rline" style="top:659px"></div>
<div class="t m" style="left:308.5px;top:666.24px;font-size:13px;color:#1f242a;letter-spacing:0.05px;">/index.htmlchristian</div>
<svg class="ic" style="left:771px;top:665px" width="34" height="14" viewBox="0 0 34 14"><circle cx="7" cy="7" r="5.4" fill="none" stroke="#5f6a86" stroke-width="1"/><rect x="4.3" y="5.2" width="5.4" height="3.6" fill="#a3abc0"/><path d="M9.6 1.8L4.6 12" stroke="#5f6a86" stroke-width="1"/><circle cx="27" cy="7" r="5.4" fill="none" stroke="#5f6a86" stroke-width="1"/><rect x="24.2" y="5.2" width="5.6" height="3.6" fill="#a3abc0"/></svg>
<div class="t" style="right:14px;top:664.70px;font-size:13px;font-weight:400;color:#1f242a;-webkit-text-stroke:0.12px currentColor;">5</div>
<div class="rline" style="top:684px"></div>
<div class="t m" style="left:308.5px;top:691.24px;font-size:13px;color:#1f242a;letter-spacing:0.05px;">/blog/posts/1geeta</div>
<svg class="ic" style="left:771px;top:690px" width="34" height="14" viewBox="0 0 34 14"><circle cx="7" cy="7" r="5.4" fill="none" stroke="#5f6a86" stroke-width="1"/><rect x="4.3" y="5.2" width="5.4" height="3.6" fill="#a3abc0"/><path d="M9.6 1.8L4.6 12" stroke="#5f6a86" stroke-width="1"/><circle cx="27" cy="7" r="5.4" fill="none" stroke="#5f6a86" stroke-width="1"/><rect x="24.2" y="5.2" width="5.6" height="3.6" fill="#a3abc0"/></svg>
<div class="t" style="right:14px;top:689.70px;font-size:13px;font-weight:400;color:#1f242a;-webkit-text-stroke:0.12px currentColor;">5</div>
<div class="rline" style="top:709px"></div>
<div class="t m" style="left:308.5px;top:714.94px;font-size:13px;color:#1f242a;letter-spacing:0.05px;">/products/office/1002chad</div>
<svg class="ic" style="left:771px;top:715px" width="34" height="14" viewBox="0 0 34 14"><circle cx="7" cy="7" r="5.4" fill="none" stroke="#5f6a86" stroke-width="1"/><rect x="4.3" y="5.2" width="5.4" height="3.6" fill="#a3abc0"/><path d="M9.6 1.8L4.6 12" stroke="#5f6a86" stroke-width="1"/><circle cx="27" cy="7" r="5.4" fill="none" stroke="#5f6a86" stroke-width="1"/><rect x="24.2" y="5.2" width="5.6" height="3.6" fill="#a3abc0"/></svg>
<div class="t" style="right:14px;top:714.70px;font-size:13px;font-weight:400;color:#1f242a;-webkit-text-stroke:0.12px currentColor;">5</div>
<div class="rline" style="top:734px"></div>
<div id="rborder"></div></div></body></html>
